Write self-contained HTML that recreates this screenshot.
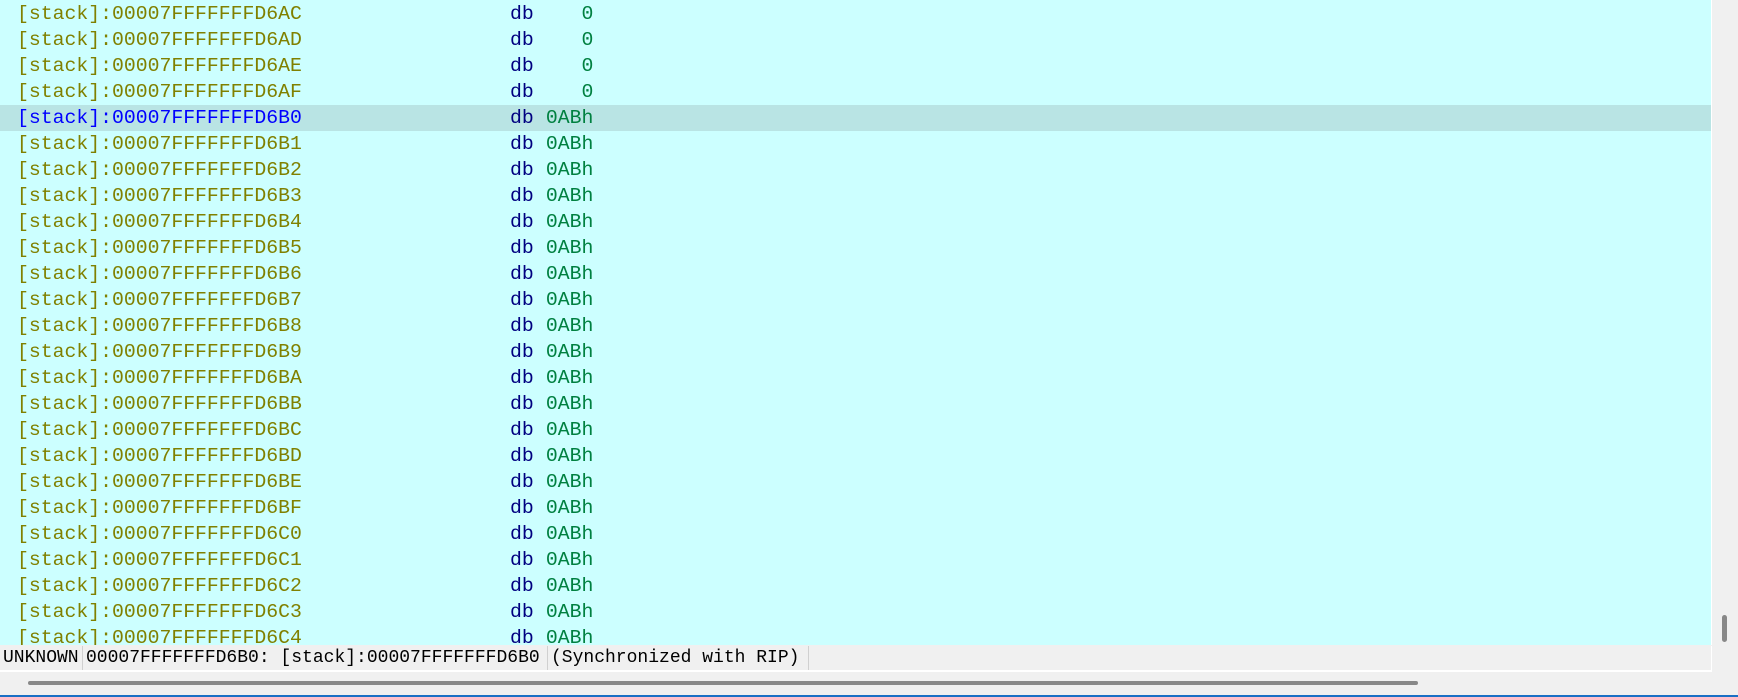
<!DOCTYPE html>
<html><head><style>
body{margin:0;width:1738px;height:697px;background:#f0f0f0;position:relative;overflow:hidden;font-family:"Liberation Mono",monospace}
#list{position:absolute;left:0;top:0;width:1711px;height:645px;background:#ccffff;overflow:hidden;border-right:1px solid #fff}
.r{position:absolute;left:0;width:1711px;height:26px;line-height:26px;font-size:19.8px;white-space:pre}
.r.h{background:#b9e4e4}
.a{position:absolute;left:17px;color:#808000}
.h .a{color:#0000ff}
.d{position:absolute;left:510px;color:#000080}
.v{position:absolute;left:534px;color:#008040}
#status{position:absolute;left:0;top:646px;width:1711px;height:24px;border-bottom:2px solid #fff;border-right:1px solid #fff;font-family:"Liberation Mono",monospace;font-size:18px;line-height:24px;color:#000;white-space:nowrap}
#status span{position:absolute;top:0;height:24px;border-right:1px solid #d0d0d0;overflow:hidden}
#hs{position:absolute;left:28px;top:681px;width:1390px;height:4px;border-radius:2px;background:#888}
#vs{position:absolute;left:1722px;top:615px;width:5px;height:27px;border-radius:3px;background:#888}
#bl{position:absolute;left:0;top:695px;width:1738px;height:2px;background:#1a6fc4}
</style></head><body>
<div id="list">
<div class="r" style="top:1px"><span class="a">[stack]:00007FFFFFFFD6AC</span><span class="d">db</span><span class="v">    0</span></div>
<div class="r" style="top:27px"><span class="a">[stack]:00007FFFFFFFD6AD</span><span class="d">db</span><span class="v">    0</span></div>
<div class="r" style="top:53px"><span class="a">[stack]:00007FFFFFFFD6AE</span><span class="d">db</span><span class="v">    0</span></div>
<div class="r" style="top:79px"><span class="a">[stack]:00007FFFFFFFD6AF</span><span class="d">db</span><span class="v">    0</span></div>
<div class="r h" style="top:105px"><span class="a">[stack]:00007FFFFFFFD6B0</span><span class="d">db</span><span class="v"> 0ABh</span></div>
<div class="r" style="top:131px"><span class="a">[stack]:00007FFFFFFFD6B1</span><span class="d">db</span><span class="v"> 0ABh</span></div>
<div class="r" style="top:157px"><span class="a">[stack]:00007FFFFFFFD6B2</span><span class="d">db</span><span class="v"> 0ABh</span></div>
<div class="r" style="top:183px"><span class="a">[stack]:00007FFFFFFFD6B3</span><span class="d">db</span><span class="v"> 0ABh</span></div>
<div class="r" style="top:209px"><span class="a">[stack]:00007FFFFFFFD6B4</span><span class="d">db</span><span class="v"> 0ABh</span></div>
<div class="r" style="top:235px"><span class="a">[stack]:00007FFFFFFFD6B5</span><span class="d">db</span><span class="v"> 0ABh</span></div>
<div class="r" style="top:261px"><span class="a">[stack]:00007FFFFFFFD6B6</span><span class="d">db</span><span class="v"> 0ABh</span></div>
<div class="r" style="top:287px"><span class="a">[stack]:00007FFFFFFFD6B7</span><span class="d">db</span><span class="v"> 0ABh</span></div>
<div class="r" style="top:313px"><span class="a">[stack]:00007FFFFFFFD6B8</span><span class="d">db</span><span class="v"> 0ABh</span></div>
<div class="r" style="top:339px"><span class="a">[stack]:00007FFFFFFFD6B9</span><span class="d">db</span><span class="v"> 0ABh</span></div>
<div class="r" style="top:365px"><span class="a">[stack]:00007FFFFFFFD6BA</span><span class="d">db</span><span class="v"> 0ABh</span></div>
<div class="r" style="top:391px"><span class="a">[stack]:00007FFFFFFFD6BB</span><span class="d">db</span><span class="v"> 0ABh</span></div>
<div class="r" style="top:417px"><span class="a">[stack]:00007FFFFFFFD6BC</span><span class="d">db</span><span class="v"> 0ABh</span></div>
<div class="r" style="top:443px"><span class="a">[stack]:00007FFFFFFFD6BD</span><span class="d">db</span><span class="v"> 0ABh</span></div>
<div class="r" style="top:469px"><span class="a">[stack]:00007FFFFFFFD6BE</span><span class="d">db</span><span class="v"> 0ABh</span></div>
<div class="r" style="top:495px"><span class="a">[stack]:00007FFFFFFFD6BF</span><span class="d">db</span><span class="v"> 0ABh</span></div>
<div class="r" style="top:521px"><span class="a">[stack]:00007FFFFFFFD6C0</span><span class="d">db</span><span class="v"> 0ABh</span></div>
<div class="r" style="top:547px"><span class="a">[stack]:00007FFFFFFFD6C1</span><span class="d">db</span><span class="v"> 0ABh</span></div>
<div class="r" style="top:573px"><span class="a">[stack]:00007FFFFFFFD6C2</span><span class="d">db</span><span class="v"> 0ABh</span></div>
<div class="r" style="top:599px"><span class="a">[stack]:00007FFFFFFFD6C3</span><span class="d">db</span><span class="v"> 0ABh</span></div>
<div class="r" style="top:625px"><span class="a">[stack]:00007FFFFFFFD6C4</span><span class="d">db</span><span class="v"> 0ABh</span></div>
</div>
<div id="status">
<span style="left:3px;width:79px">UNKNOWN</span>
<span style="left:86px;width:461px">00007FFFFFFFD6B0: [stack]:00007FFFFFFFD6B0</span>
<span style="left:551px;width:257px">(Synchronized with RIP)</span>
</div>
<div id="hs"></div>
<div id="vs"></div>
<div id="bl"></div>
</body></html>
